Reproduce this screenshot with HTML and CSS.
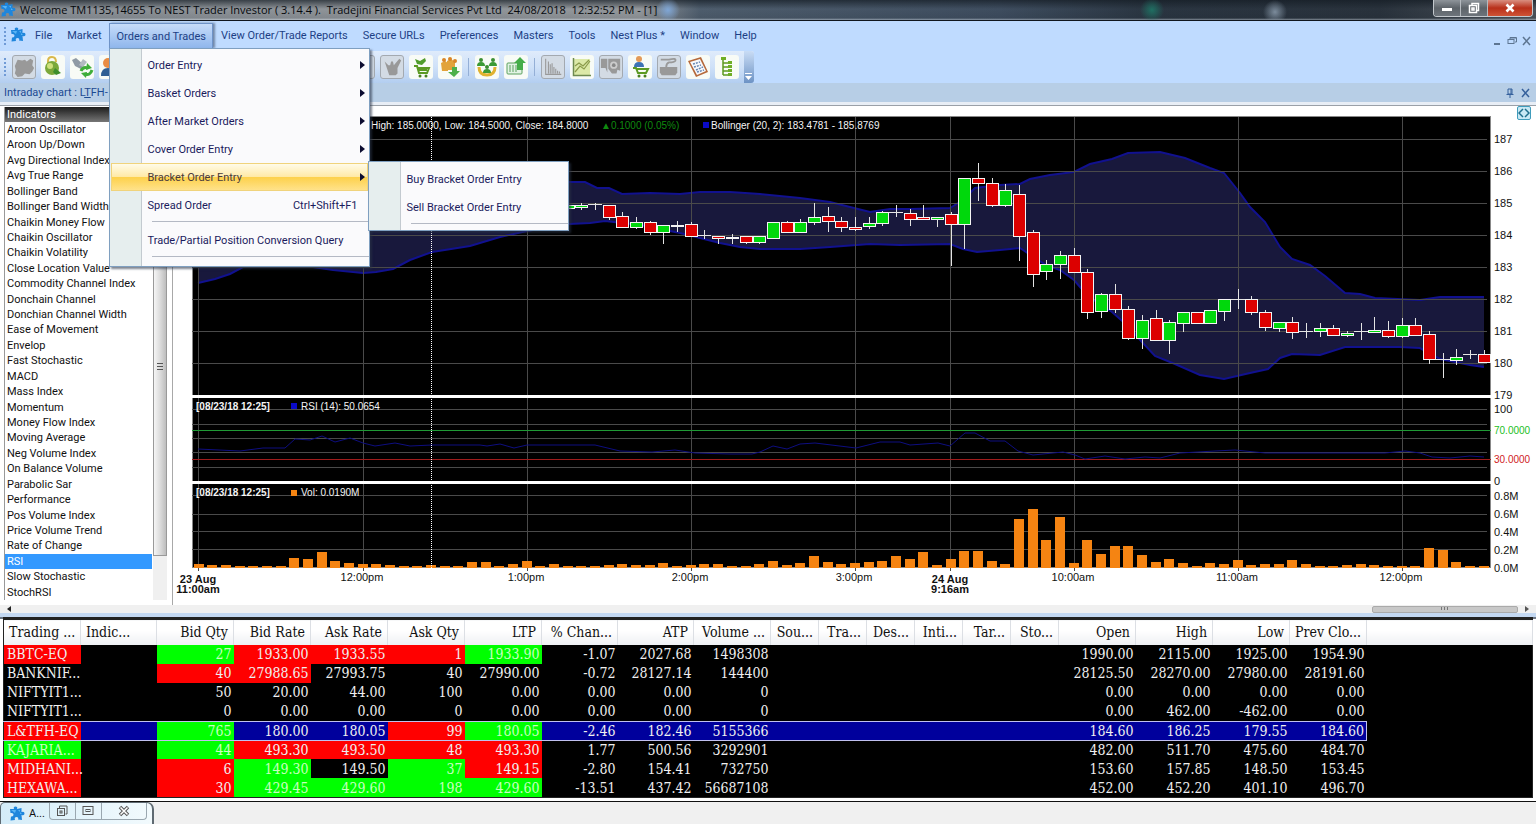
FILE: index.html
```
<!DOCTYPE html>
<html lang="en">
<head>
    <meta charset="UTF-8">
    <meta name="viewport" content="width=device-width, initial-scale=1.0">
    <title>NEST Trader Investor</title>
    <link rel="stylesheet" href="styles.css">
</head>
<body>

    <!-- shared puzzle logo -->
    <svg class="defs" width="0" height="0">
        <symbol id="puzzle" viewBox="0 0 16 16">
            <path d="M1 3 L5 3 Q4 0.5 6.5 0.5 Q9 0.5 8 3 L12.5 2 L12.5 6 Q15.5 5 15.5 7.5 Q15.5 10 12.5 9 L13 14 L9 13.5 Q10 11 7.5 11 Q5 11 6 14 L1.5 14.5 L2 10.5 Q4.5 11 4.5 8.5 Q4.5 6.5 1.5 7 Z" fill="#1f86dc"/>
            <path d="M2 4 L7 4 L6 7 Z M9 4 L11 4 L11 8 L13 8" fill="#58b4f5"/>
        </symbol>
    </svg>

    <header class="titlebar">
        <svg class="logo" width="16" height="16"><use href="#puzzle"/></svg>
        <h1>Welcome TM1135,14655 To NEST Trader Investor ( 3.14.4 ).&nbsp; Tradejini Financial Services Pvt Ltd&nbsp; 24/08/2018&nbsp; 12:32:52 PM - [1]</h1>
        <div class="win-buttons">
            <button aria-label="Minimize"><svg width="12" height="12"><rect x="1" y="6" width="10" height="3" fill="#fff"/></svg></button>
            <button aria-label="Restore"><svg width="12" height="12" fill="none" stroke="#fff" stroke-width="1.5"><path d="M4 3V1.500h6.500v7H9"/><rect x="1.500" y="3.500" width="7" height="7"/><rect x="4" y="6" width="2" height="2"/></svg></button>
            <button class="close" aria-label="Close"><svg width="12" height="12"><path d="M2.500 2.500l7 7M9.500 2.500l-7 7" stroke="#fff" stroke-width="2.600"/></svg></button>
        </div>
    </header>

    <nav class="menubar">
        <span class="grip"></span>
        <svg class="logo" width="16" height="16"><use href="#puzzle"/></svg>
        <button>File</button>
        <button>Market</button>
        <div class="menu-open">
            <button class="active">Orders and Trades</button>
            <ul class="menu">
                <li><button>Order Entry</button><i class="arrow"></i></li>
                <li><button>Basket Orders</button><i class="arrow"></i></li>
                <li><button>After Market Orders</button><i class="arrow"></i></li>
                <li><button>Cover Order Entry</button><i class="arrow"></i></li>
                <li class="selected"><button>Bracket Order Entry</button><i class="arrow"></i>
                    <ul class="menu submenu">
                        <li><button>Buy Bracket Order Entry</button></li>
                        <li><button>Sell Bracket Order Entry</button></li>
                        <li class="sep"></li>
                    </ul>
                </li>
                <li><button>Spread Order</button><kbd>Ctrl+Shift+F1</kbd></li>
                <li class="sep"></li>
                <li><button>Trade/Partial Position Conversion Query</button></li>
                <li class="sep"></li>
            </ul>
        </div>
        <button>View Order/Trade Reports</button>
        <button>Secure URLs</button>
        <button>Preferences</button>
        <button>Masters</button>
        <button>Tools</button>
        <button>Nest Plus *</button>
        <button>Window</button>
        <button>Help</button>
        <div class="mdi-buttons">
            <button aria-label="Minimize chart"><svg width="10" height="10"><rect x="2" y="7" width="6" height="2" fill="#5d7591"/></svg></button>
            <button aria-label="Restore chart"><svg width="10" height="10" fill="none" stroke="#5d7591"><path d="M3 3V1.500h6.500V6H8M3 2h6"/><rect x="1" y="3.500" width="6" height="4"/></svg></button>
            <button aria-label="Close chart"><svg width="10" height="10"><path d="M1 1l7 8M8 1l-7 8" stroke="#5d7591" stroke-width="1.500"/></svg></button>
        </div>
    </nav>

    <div class="toolbar-row">
        <div class="toolbar">
            <span class="grip"></span>
            <button class="off" aria-label="Connect"><svg viewBox="0 0 24 24"><path d="M5 4l5 1 3-1 2 2 4-3 3 2-1 5 2 3-2 4-3 3-5-1-3 3-5 1-3-4 1-4-1-4z" fill="#999"/></svg></button>
            <button aria-label="Lock"><svg viewBox="0 0 24 24"><path d="M7 10V6q0-4 4-4t4 5" fill="none" stroke="#d9b84a" stroke-width="2"/><circle cx="11" cy="13" r="7" fill="#7ba83a"/><circle cx="9" cy="11" r="3" fill="#cfe07a"/><path d="M14 13l6 5-5 2-3-3z" fill="#3e8e2c"/></svg></button>
            <button aria-label="Reconnect"><svg viewBox="0 0 24 24"><path d="M2 5l4-2 8 7-3 4-6-3z" fill="#8f9aa5"/><path d="M13 4l4 3-4 5-4-2z" fill="#b2bac2"/><path d="M11 16q2-5 7-3M22 15q-2 6-7 4" fill="none" stroke="#3fae3a" stroke-width="3"/><path d="M17 8l5 5-6 2zM16 23l-5-5 6-1z" fill="#3fae3a"/></svg></button>
            <button aria-label="User"><svg viewBox="0 0 24 24"><circle cx="9" cy="8" r="5" fill="#e98c43"/><path d="M2 21q0-8 7-8t7 8z" fill="#2f5f94"/></svg></button>
            <span class="toolbar-rest"></span>
            <button class="off" aria-label="Orders"><svg viewBox="0 0 24 24"><rect x="5" y="5" width="14" height="14" fill="#999"/></svg></button>
            <button class="off" aria-label="Basket"><svg viewBox="0 0 24 24"><path d="M4 6l4 4h2l1-4h2l1 4 6-7 2 2-4 8v6l-2 2H9l-2-6z" fill="#999"/></svg></button>
            <button aria-label="Buy cart"><svg viewBox="0 0 24 24"><path d="M5 11h3l2 7h8l2-5H9" fill="none" stroke="#5b9a22" stroke-width="2"/><path d="M6 4l5 2 5-3 1 3-4 4-5-1z" fill="#4f9c2b"/><path d="M10 15h8" stroke="#5b9a22" stroke-width="2"/><circle cx="11" cy="21" r="1.500" fill="#47811c"/><circle cx="17" cy="21" r="1.500" fill="#47811c"/></svg></button>
            <button aria-label="Group orders"><svg viewBox="0 0 24 24"><path d="M3 8l4-2 3 2v8H4zM9 6l4-2 4 3v8H9z" fill="#e2a33a"/><circle cx="6" cy="5" r="2" fill="#d98528"/><circle cx="12" cy="4" r="2" fill="#d98528"/><circle cx="17" cy="6" r="2" fill="#d98528"/><path d="M14 12h5v4h3l-6 6-6-5h4z" fill="#4db04a"/></svg></button>
            <span class="sep"></span>
            <button aria-label="Members"><svg viewBox="0 0 24 24"><path d="M4 12q0 8 8 8t8-8" fill="none" stroke="#e0b22f" stroke-width="3"/><circle cx="6" cy="5" r="2" fill="#3b8f33"/><circle cx="18" cy="5" r="2" fill="#3b8f33"/><circle cx="12" cy="12" r="2" fill="#3b8f33"/><path d="M2 11q0-4 4-4t4 4zM14 11q0-4 4-4t4 4zM8 18q0-4 4-4t4 4z" fill="#3b9a35"/></svg></button>
            <button aria-label="Upload"><svg viewBox="0 0 24 24"><rect x="3" y="8" width="15" height="11" rx="1" fill="#e2f3e4" stroke="#5aa05e"/><path d="M6 10v7M9 10v7M12 10v7" stroke="#5aa05e"/><path d="M16 2l6 6h-3v7h-6V8h-3z" fill="#45ad49"/></svg></button>
            <span class="sep"></span>
            <button class="off" aria-label="Histogram"><svg viewBox="0 0 24 24"><path d="M4 3v17h17M7 6v13M9 9v10M11 8v11M13 12v7M15 14v5M17 16v3M19 17v2" fill="none" stroke="#999" stroke-width="1.200"/></svg></button>
            <button aria-label="Line chart"><svg viewBox="0 0 24 24"><rect x="4" y="4" width="16" height="16" fill="#dce9a8"/><path d="M3.500 3v17.500H21" fill="none" stroke="#6e8a50" stroke-width="1.500"/><path d="M5 17l5-6 4 3 6-8M5 11l4-3 4 3 6-6" fill="none" stroke="#8a9a4a" stroke-width="1.200"/></svg></button>
            <button class="off" aria-label="Snapshot"><svg viewBox="0 0 24 24"><path d="M1 3h7v15l-2-5H1z" fill="#999"/><path d="M9 3h13v13l-3-1-1 4h-5l-4-5z" fill="#999"/><circle cx="15" cy="10" r="4" fill="#ccc"/><circle cx="15" cy="10" r="2" fill="#888"/></svg></button>
            <button aria-label="Client cart"><svg viewBox="0 0 24 24"><circle cx="11" cy="4" r="3" fill="#e39a58"/><path d="M6 12q0-5 5-5t5 5z" fill="#3c72b4"/><path d="M5 13h3l2 5h8l2-4H9" fill="none" stroke="#5b9a22" stroke-width="2"/><circle cx="11" cy="21" r="1.500" fill="#47811c"/><circle cx="17" cy="21" r="1.500" fill="#47811c"/></svg></button>
            <button class="off" aria-label="Scanner"><svg viewBox="0 0 24 24"><path d="M2 12h19v6l-2 3H4l-2-3z" fill="#999"/><path d="M3 4h9q8-2 7 1-1 2-7 2-3 1-3 5" fill="none" stroke="#999" stroke-width="2"/></svg></button>
            <button aria-label="Calculator"><svg viewBox="0 0 24 24"><path d="M2 6l13-4 7 15-12 5z" fill="#b5683a"/><path d="M4 7l10-3 6 12-9 4z" fill="#f7f9fc"/><path d="M7 9l7-2M8 12l7-2M10 15l7-3M11 17l7-2" stroke="#6887b3" stroke-width="1.500" stroke-dasharray="2 1"/></svg></button>
            <button aria-label="Tree"><svg viewBox="0 0 24 24"><path d="M8 4v16M8 8h6M8 12h8M8 16h8M8 20h8" fill="none" stroke="#5c9a1e" stroke-width="1.500"/><path d="M6 2h5v3H6zM13 6h4v3h-4zM13 10h4v3h-4zM13 14h4v3h-4zM13 18h4v3h-4z" fill="#6fae25"/></svg></button>
            <button class="overflow" aria-label="More tools"><svg width="9" height="9"><path d="M1 1.500h7" stroke="#fff"/><path d="M1 4h7l-3.500 4z" fill="#fff"/></svg></button>
        </div>
    </div>

    <div class="caption">
        <span>Intraday chart : L<u>T</u>FH-</span>
        <button class="pin" aria-label="Pin"><svg width="10" height="10" fill="none" stroke="#35609c"><path d="M3 1h4v5H3zM1.500 6.500h7M5 6v4M6 1v5"/></svg></button>
        <button aria-label="Close panel"><svg width="10" height="10"><path d="M1 1l7 8M8 1l-7 8" stroke="#35609c" stroke-width="1.500"/></svg></button>
    </div>

    <main class="workspace">
        <div class="panes">
            <aside class="indicators">
                <div class="list">
                    <h2>Indicators</h2>
                    <ul>
                        <li>Aroon Oscillator</li>
                        <li>Aroon Up/Down</li>
                        <li>Avg Directional Index</li>
                        <li>Avg True Range</li>
                        <li>Bollinger Band</li>
                        <li>Bollinger Band Width</li>
                        <li>Chaikin Money Flow</li>
                        <li>Chaikin Oscillator</li>
                        <li>Chaikin Volatility</li>
                        <li>Close Location Value</li>
                        <li>Commodity Channel Index</li>
                        <li>Donchain Channel</li>
                        <li>Donchian Channel Width</li>
                        <li>Ease of Movement</li>
                        <li>Envelop</li>
                        <li>Fast Stochastic</li>
                        <li>MACD</li>
                        <li>Mass Index</li>
                        <li>Momentum</li>
                        <li>Money Flow Index</li>
                        <li>Moving Average</li>
                        <li>Neg Volume Index</li>
                        <li>On Balance Volume</li>
                        <li>Parabolic Sar</li>
                        <li>Performance</li>
                        <li>Pos Volume Index</li>
                        <li>Price Volume Trend</li>
                        <li>Rate of Change</li>
                        <li class="current">RSI</li>
                        <li>Slow Stochastic</li>
                        <li>StochRSI</li>
                    </ul>
                </div>
                <div class="vscroll"><div class="thumb"></div></div>
            </aside>
            <section class="chart">
                <svg id="chart" viewBox="173 106 1358 499"></svg>
                <button class="expand" aria-label="Toggle panel"><svg width="12" height="10"><path d="M5 1L1 5l4 4M7 1l4 4-4 4" fill="none" stroke="#1f6f8c" stroke-width="1.500"/></svg></button>
            </section>
        </div>
        <div class="hscroll">
            <svg width="6" height="8"><path d="M5 1v6L1 4z" fill="#222"/></svg>
            <div class="thumb"></div>
            <svg width="6" height="8"><path d="M1 1v6l4-3z" fill="#555"/></svg>
        </div>
    </main>

    <section class="watch">
        <table>
            <colgroup>
                <col class="w77"><col class="w76"><col class="w77"><col class="w77"><col class="w77"><col class="w77"><col class="w77"><col class="w76"><col class="w76"><col class="w77">
                <col class="w48"><col class="w48"><col class="w48"><col class="w48"><col class="w48"><col class="w48">
                <col class="w77"><col class="w77"><col class="w77"><col class="w77"><col>
            </colgroup>
            <thead>
                <tr><th class="l">Trading ...</th><th class="l">Indic...</th><th>Bid Qty</th><th>Bid Rate</th><th>Ask Rate</th><th>Ask Qty</th><th>LTP</th><th>% Chan...</th><th>ATP</th><th>Volume ...</th><th>Sou...</th><th>Tra...</th><th>Des...</th><th>Inti...</th><th>Tar...</th><th>Sto...</th><th>Open</th><th>High</th><th>Low</th><th>Prev Clo...</th><th></th></tr>
            </thead>
            <tbody>
                <tr><td class="l red">BBTC-EQ</td><td></td><td class="green">27</td><td class="red">1933.00</td><td class="red">1933.55</td><td class="red">1</td><td class="green">1933.90</td><td>-1.07</td><td>2027.68</td><td>1498308</td><td></td><td></td><td></td><td></td><td></td><td></td><td>1990.00</td><td>2115.00</td><td>1925.00</td><td>1954.90</td><td></td></tr>
                <tr><td class="l">BANKNIF...</td><td></td><td class="red">40</td><td class="red">27988.65</td><td>27993.75</td><td>40</td><td>27990.00</td><td>-0.72</td><td>28127.14</td><td>144400</td><td></td><td></td><td></td><td></td><td></td><td></td><td>28125.50</td><td>28270.00</td><td>27980.00</td><td>28191.60</td><td></td></tr>
                <tr><td class="l">NIFTYIT1...</td><td></td><td>50</td><td>20.00</td><td>44.00</td><td>100</td><td>0.00</td><td>0.00</td><td>0.00</td><td>0</td><td></td><td></td><td></td><td></td><td></td><td></td><td>0.00</td><td>0.00</td><td>0.00</td><td>0.00</td><td></td></tr>
                <tr><td class="l">NIFTYIT1...</td><td></td><td>0</td><td>0.00</td><td>0.00</td><td>0</td><td>0.00</td><td>0.00</td><td>0.00</td><td>0</td><td></td><td></td><td></td><td></td><td></td><td></td><td>0.00</td><td>462.00</td><td>-462.00</td><td>0.00</td><td></td></tr>
                <tr class="current"><td class="l red">L&amp;TFH-EQ</td><td></td><td class="green">765</td><td>180.00</td><td>180.05</td><td class="red">99</td><td class="green">180.05</td><td>-2.46</td><td>182.46</td><td>5155366</td><td></td><td></td><td></td><td></td><td></td><td></td><td>184.60</td><td>186.25</td><td>179.55</td><td>184.60</td><td></td></tr>
                <tr><td class="l green">KAJARIA...</td><td></td><td class="green">44</td><td class="red">493.30</td><td class="red">493.50</td><td class="red">48</td><td class="red">493.30</td><td>1.77</td><td>500.56</td><td>3292901</td><td></td><td></td><td></td><td></td><td></td><td></td><td>482.00</td><td>511.70</td><td>475.60</td><td>484.70</td><td></td></tr>
                <tr><td class="l red">MIDHANI...</td><td></td><td class="red">6</td><td class="green">149.30</td><td>149.50</td><td class="green">37</td><td class="red">149.15</td><td>-2.80</td><td>154.41</td><td>732750</td><td></td><td></td><td></td><td></td><td></td><td></td><td>153.60</td><td>157.85</td><td>148.50</td><td>153.45</td><td></td></tr>
                <tr><td class="l red">HEXAWA...</td><td></td><td class="red">30</td><td class="green">429.45</td><td class="green">429.60</td><td class="green">198</td><td class="green">429.60</td><td>-13.51</td><td>437.42</td><td>56687108</td><td></td><td></td><td></td><td></td><td></td><td></td><td>452.00</td><td>452.20</td><td>401.10</td><td>496.70</td><td></td></tr>
            </tbody>
        </table>
    </section>

    <footer class="tray">
        <div class="mini">
            <svg class="logo" width="16" height="16"><use href="#puzzle"/></svg>
            <span>A...</span>
            <div class="mini-buttons">
                <button aria-label="Restore window"><svg width="12" height="12" fill="none" stroke="#555"><path d="M3.500 3V1h7.500v8H9.500"/><rect x="1.500" y="3.500" width="7" height="7"/><rect x="4" y="6" width="2" height="2"/></svg></button>
                <button aria-label="Maximize window"><svg width="12" height="12" fill="none" stroke="#555"><rect x="1" y="1.500" width="10" height="8"/><rect x="4" y="4.500" width="4" height="2"/></svg></button>
                <button class="wide" aria-label="Close window"><svg width="12" height="12"><path d="M2 2l8 8M10 2l-8 8" stroke="#555" stroke-width="3.500"/><path d="M2.500 2.500l7 7M9.500 2.500l-7 7" stroke="#fff" stroke-width="1.500"/></svg></button>
            </div>
        </div>
    </footer>

    <script src="chart.js"></script>
</body>
</html>
```

FILE: styles.css
```
* {
    box-sizing: border-box;
}
body {
    margin: 0;
    height: 100vh;
    display: flex;
    flex-direction: column;
    overflow: hidden;
    font-family: Roboto, "Open Sans", sans-serif;
    font-size: 11px;
    background-color: #f0f0f0;
}
button {
    font: inherit;
    color: inherit;
    background: none;
    border: none;
    padding: 0;
    margin: 0;
    white-space: nowrap;
}
button svg {
    display: block;
}
ul {
    list-style: none;
    margin: 0;
    padding: 0;
}
.defs {
    position: absolute;
}
.logo {
    flex: none;
}

/* title bar */
.titlebar {
    flex: none;
    height: 21px;
    display: flex;
    align-items: center;
    border-bottom: 1px solid #10161e;
    background:
        radial-gradient(circle at 668px 10px, #7fa6d6 0, rgba(127, 166, 214, 0) 12px),
        radial-gradient(circle at 1152px 10px, #1f6f62 0, rgba(31, 111, 98, 0) 12px),
        radial-gradient(circle at 1275px 12px, #7c8c9c 0, rgba(124, 140, 156, 0) 12px),
        linear-gradient(to bottom, rgba(20, 28, 36, 0.7), rgba(20, 28, 36, 0) 45%, rgba(20, 28, 36, 0.1) 90%, rgba(220, 230, 240, 0.5)),
        linear-gradient(to right, #8a9096 0, #94989c 640px, #4e5d6d 700px, #3e4d5f 1000px, #2a3541 1150px, #29323c 1380px, #4c535b 100%);
}
.titlebar h1 {
    margin: 0 0 0 4px;
    flex: 1;
    font-family: "Open Sans", sans-serif;
    font-size: 11px;
    font-weight: normal;
    line-height: 16px;
    color: #05080c;
    white-space: nowrap;
}
.win-buttons {
    align-self: flex-start;
    display: flex;
    margin-right: 3px;
    border: 1px solid #c3c8cd;
    border-top: none;
    border-radius: 0 0 4px 4px;
    overflow: hidden;
}
.win-buttons button {
    width: 27px;
    height: 16px;
    display: flex;
    align-items: center;
    justify-content: center;
    border-right: 1px solid #b5babf;
    background: linear-gradient(#8e949a, #5d6369 50%, #6d747b);
}
.win-buttons .close {
    width: 44px;
    border-right: none;
    background: linear-gradient(#d98f80, #b8301a 50%, #cf5336);
}

/* menu bar */
.menubar {
    flex: none;
    height: 30px;
    display: flex;
    align-items: flex-start;
    gap: 1px;
    padding-top: 2px;
    color: #1d3f85;
    background-color: #bfdbff;
}
.grip {
    flex: none;
    width: 2px;
    height: 18px;
    margin: 0 3px 0 4px;
    background: repeating-linear-gradient(#6f9ad6 0 2px, transparent 2px 4px);
}
.menubar > .grip,
.menubar > .logo {
    margin-top: 4px;
}
.menubar > button,
.menu-open > button {
    height: 25px;
    padding: 0 7px;
}
.menubar > .logo + button {
    margin-left: 1px;
}
.menu-open {
    position: relative;
}
.menu-open > .active {
    padding: 0 6px;
    border: 1px solid #6e93c8;
    border-bottom: none;
    background: linear-gradient(#c6dcfa, #8fb6ec);
    box-shadow: 2px 0 2px rgba(60, 80, 110, 0.6);
}
.mdi-buttons {
    margin-left: auto;
    padding: 13px 4px 0 0;
    display: flex;
    gap: 5px;
}

.menu {
    position: absolute;
    z-index: 10;
    top: 100%;
    left: 0;
    width: 261px;
    padding: 2px 0 5px;
    border: 1px solid #7f9fc0;
    color: #1b1b5c;
    background: linear-gradient(to right, #e6eeee 31px, #c3cad0 31px, #c3cad0 32px, #fafafc 32px);
    box-shadow: 2px 2px 2px rgba(40, 50, 70, 0.6);
}
.menu li {
    position: relative;
    height: 28px;
    display: flex;
    align-items: center;
    justify-content: space-between;
    padding: 0 4px 0 37px;
}
.menu .sep {
    height: 7px;
    margin-left: 42px;
    padding: 0;
    background: linear-gradient(#b4b9c4, #b4b9c4) 0 2px / 100% 1px no-repeat;
}
.menu kbd {
    font: inherit;
    margin-right: 8px;
}
.arrow {
    border-left: 5px solid #0c0c30;
    border-top: 4px solid transparent;
    border-bottom: 4px solid transparent;
}
.menu .selected {
    color: #4a3a3a;
}
.menu .selected::before {
    content: "";
    position: absolute;
    z-index: -1;
    inset: 0 1px;
    border: 1px solid #f0d37c;
    background: linear-gradient(#fffbe8, #ffeaa8 48%, #fdd14c 52%, #ffe28a);
}
.submenu {
    top: -2px;
    left: 258px;
    width: 201px;
    padding: 3px 0 2px;
    color: #1b1b5c;
}

/* toolbar */
.toolbar-row {
    flex: none;
    height: 32px;
    display: flex;
    background-color: #bfdbff;
}
.toolbar {
    display: flex;
    align-items: center;
    gap: 5px;
    border-radius: 0 3px 3px 0;
    background: linear-gradient(#dfebfb, #cfe1f8 50%, #b3cef0);
}
.toolbar .grip {
    margin-right: 1px;
}
.toolbar button {
    width: 24px;
    height: 24px;
    border-radius: 3px;
    background-color: #f8fbf6;
}
.toolbar .off {
    border: 1px solid #a3a9b0;
    background-color: #d3dbe4;
}
.toolbar .sep {
    width: 1px;
    height: 18px;
    margin: 0 1px;
    background-color: #94afd6;
}
.toolbar-rest {
    width: 218px;
}
.toolbar .overflow {
    align-self: stretch;
    width: 10px;
    height: auto;
    display: flex;
    align-items: flex-end;
    padding-bottom: 2px;
    border-radius: 0 3px 3px 0;
    background: linear-gradient(#c9dcf5, #6d93c5);
}

/* docked panel caption */
.caption {
    flex: none;
    height: 19px;
    display: flex;
    align-items: center;
    gap: 6px;
    padding: 0 5px 0 4px;
    color: #1d4a92;
    background-color: #b7cee6;
}
.caption .pin {
    margin-left: auto;
}

/* indicator list + chart */
.workspace {
    flex: 1;
    min-height: 0;
    display: flex;
    flex-direction: column;
    padding-top: 3px;
    background-color: #e8eef6;
}
.panes {
    flex: 1;
    min-height: 0;
    display: flex;
    border-top: 1px solid #9aa0a8;
    background-color: #fff;
}
.indicators {
    flex: none;
    width: 173px;
    display: flex;
    padding: 1px 5px 5px 4px;
    border-right: 1px solid #a8a8a8;
}
.list {
    flex: 1;
    display: flex;
    flex-direction: column;
    border-left: 1px solid #999;
}
.list h2 {
    margin: 0;
    font-size: 11px;
    font-weight: normal;
    line-height: 15px;
    padding-left: 2px;
    color: #fff;
    background: linear-gradient(#1c1c1c, #777);
}
.list ul {
    flex: 1;
    display: flex;
    flex-direction: column;
    margin-right: 1px;
}
.list li {
    flex: 1;
    line-height: 15px;
    padding-left: 2px;
    color: #111;
    white-space: nowrap;
}
.list .current {
    color: #fff;
    background-color: #3399ff;
}
.vscroll {
    width: 14px;
    padding-bottom: 44px;
    background-color: #f0f0f0;
}
.vscroll .thumb {
    height: 100%;
    border: 1px solid #999;
    background:
        repeating-linear-gradient(#555 0 1px, transparent 1px 3px) 50% 255px / 6px 8px no-repeat,
        linear-gradient(to right, #f5f5f5, #dcdcdc 50%, #bdbdbd);
}
.chart {
    position: relative;
    flex: 1;
    min-width: 0;
    margin-right: 5px;
    overflow: hidden;
}
.chart > svg {
    display: block;
    width: 100%;
    height: 100%;
    font-family: "Liberation Sans", Arial, sans-serif;
    font-size: 10px;
}
.expand {
    position: absolute;
    top: 0;
    right: 0;
    width: 14px;
    height: 14px;
    border: 1px solid #3f9cbc;
    border-radius: 2px;
    background-color: #c8e8f4;
}
.hscroll {
    flex: none;
    height: 8px;
    display: flex;
    align-items: center;
    padding: 0 6px;
    background-color: #f0f0f0;
}
.hscroll .thumb {
    width: 146px;
    height: 7px;
    margin: 0 6px 0 auto;
    border: 1px solid #aaa;
    border-radius: 2px;
    background: repeating-linear-gradient(to right, #777 0 1px, transparent 1px 3px) 50% 0 / 8px 3px no-repeat, #c8c8c8;
}

/* chart parts */
.pane { fill: #000; stroke: #888; }
.divider { fill: #fff; }
.grid { stroke: #4a4a4a; fill: none; }
.cursor { stroke: #fff; stroke-dasharray: 1 1; }
.band { fill: #18183c; }
.band-line { fill: none; stroke: #11118f; stroke-width: 2; }
.rsi-line { fill: none; stroke: #0e0e80; }
.high-line { stroke: #1f9a35; }
.low-line { stroke: #a01c1c; }
.wick { stroke: #e4e4e4; }
.up { fill: #00d80c; stroke: #f4f4f4; }
.down { fill: #dc0000; stroke: #f4f4f4; }
.bar { fill: #f58412; }
.legend { fill: #f4f4f4; }
.legend-up { fill: #0f8a0f; }
.axis { font-size: 11px; fill: #111; }
.axis-high { fill: #1cc024; }
.axis-low { fill: #d01c24; }
.bold { font-weight: bold; }

/* market watch */
.watch {
    flex: none;
    padding: 0 3px 3px;
    border-top: 4px solid #c3d8f2;
    border-bottom: 1px solid #111;
    background: linear-gradient(#6c7684 2px, #fff 2px);
}
.watch table {
    width: 100%;
    height: 181px;
    table-layout: fixed;
    border-collapse: collapse;
    border: 1px solid #222;
    border-width: 3px 1px 1px;
    font-family: "DejaVu Serif Condensed", "DejaVu Serif", serif;
    font-size: 14px;
    line-height: 18px;
    color: #f0f0f0;
    background-color: #000;
}
.w77 { width: 77px; }
.w76 { width: 76px; }
.w48 { width: 48px; }
.watch th {
    height: 26px;
    padding: 0 5px;
    font-weight: normal;
    text-align: right;
    white-space: nowrap;
    color: #111;
    border-right: 1px solid #dcdfe4;
    background: linear-gradient(#fff 40%, #eef0f3);
}
.watch td {
    height: 19px;
    padding: 0 2px;
    text-align: right;
    white-space: nowrap;
}
.watch .l {
    text-align: left;
}
.watch td.l {
    padding: 0 3px;
}
.red { background-color: #ff0000; }
.green { background-color: #00ff00; color: #c8ffc0; }
.current td {
    border-top: 1px solid #c0c0f0;
    border-bottom: 1px solid #c0c0f0;
}
.current td:not(.red):not(.green) { background-color: #00009c; }
.current td:nth-child(20) { border-right: 1px solid #c0c0f0; }
.watch .current td:last-child {
    border: none;
    background-color: #000;
}

/* minimised child windows */
.tray {
    flex: none;
    height: 22px;
    display: flex;
    background-color: #f0f0f0;
}
.mini {
    width: 154px;
    display: flex;
    gap: 4px;
    padding: 0 8px;
    border: 1px solid #5f6a72;
    border-width: 1px 2px 0 1px;
    border-radius: 5px 7px 0 0;
    background: linear-gradient(to right, #d4ecf8, #f2fafd);
}
.mini .logo {
    margin-top: 3px;
}
.mini span {
    line-height: 22px;
    color: #111;
}
.mini-buttons {
    flex: none;
    height: 17px;
    display: flex;
    border: 1px solid #9aa7b0;
    border-top: none;
    border-radius: 0 0 4px 4px;
}
.mini-buttons button {
    width: 26px;
    display: flex;
    align-items: center;
    justify-content: center;
    border-right: 1px solid #9aa7b0;
}
.mini-buttons .wide {
    width: 44px;
    border-right: none;
}
```

FILE: chart.js
```
const NS = "http://www.w3.org/2000/svg";
const chart = document.getElementById("chart");

const LEFT = 192, RIGHT = 1491, STEP = 13.67, BASE = 568;
const xAt = i => 198.7 + STEP * i;

function add(tag, cls, attrs, text) {
    const el = document.createElementNS(NS, tag);
    el.setAttribute("class", cls);
    for (const key in attrs) el.setAttribute(key, attrs[key]);
    if (text) el.textContent = text;
    chart.appendChild(el);
}
function line(cls, x1, y1, x2, y2) {
    add("line", cls, { x1, y1, x2, y2 });
}
function label(cls, x, y, text, anchor) {
    add("text", cls, { x, y, "text-anchor": anchor || "start" }, text);
}

const upper = "198,190 300,180 430,178 569,182 585,182 597,188 609,188 622,194 650,193 680,194 700,192 730,192 760,194 800,198 830,202 850,207 870,212 890,209 910,209 950,208 963,200 975,188 1000,185 1020,184 1030,179 1050,175 1074,172 1090,164 1112,159 1128,153 1160,152 1185,158 1210,168 1224,173 1240,193 1250,207 1265,222 1280,247 1292,259 1310,265 1325,276 1345,293 1360,294 1375,298 1420,300 1440,297 1484,297";
const lower = "198,283 215,279 230,274 243,267 280,262 313,267 333,270 363,273 376,272 393,269 410,260 432,252 470,246 500,237 527,231 569,224 590,223 605,221 640,225 680,233 720,243 740,247 760,249 800,249 830,247 870,244 900,245 950,244 963,249 977,252 1000,250 1020,248 1032,256 1046,265 1060,270 1074,280 1087,295 1101,305 1112,312 1128,326 1142,342 1155,356 1175,364 1200,375 1224,379 1250,373 1268,369 1280,358 1292,354 1320,355 1345,347 1400,347 1420,348 1440,359 1470,365 1484,367";
const rsi = "198,449 240,451 263,448 285,448 295,439 310,440 322,436 335,442 350,438 363,443 375,446 395,443 410,446 432,445 480,445 487,446 500,444 514,448 527,445 595,445 620,451 652,452 675,450 695,453 730,454 752,454 760,452 773,446 787,449 800,444 815,443 856,448 880,442 900,442 910,445 938,443 950,446 965,433 975,433 990,441 1005,441 1018,451 1033,455 1063,452 1075,455 1085,459 1105,456 1125,459 1145,457 1160,458 1180,453 1215,451 1235,450 1265,453 1385,453 1405,451 1420,453 1432,457 1450,458 1470,456 1484,457";

// body top, body bottom, high, low, direction; first candle is index 27
const candles = [
    [205, 208, 205, 208, "up"], [205, 207, 203, 210, "up"], [204, 204, 203, 210, "flat"], [205, 217, 205, 220, "down"],
    [216, 227, 212, 227, "down"], [222, 227, 217, 229, "up"], [222, 232, 221, 235, "down"], [225, 232, 225, 244, "up"],
    [225, 226, 221, 232, "up"], [224, 236, 222, 236, "down"], [235, 235, 230, 239, "flat"], [236, 238, 236, 244, "down"],
    [237, 238, 234, 244, "up"], [236, 242, 236, 244, "down"], [236, 242, 236, 244, "up"], [222, 238, 222, 238, "up"],
    [222, 232, 221, 232, "down"], [222, 232, 219, 232, "up"], [217, 222, 203, 225, "up"], [216, 221, 207, 232, "down"],
    [221, 227, 217, 232, "down"], [227, 229, 217, 231, "down"], [223, 226, 217, 229, "up"], [212, 223, 211, 226, "up"],
    [212, 212, 205, 217, "flat"], [213, 219, 209, 226, "down"], [217, 219, 205, 219, "down"], [217, 219, 217, 227, "up"],
    [214, 224, 212, 266, "down"], [178, 224, 178, 249, "up"], [178, 183, 163, 201, "down"], [183, 205, 178, 207, "down"],
    [190, 205, 184, 207, "up"], [194, 236, 185, 261, "down"], [232, 274, 230, 287, "down"], [264, 271, 260, 280, "up"],
    [255, 264, 251, 279, "up"], [255, 272, 248, 272, "down"], [272, 312, 269, 319, "down"], [294, 311, 293, 318, "up"],
    [294, 309, 284, 313, "down"], [309, 338, 306, 340, "down"], [320, 338, 315, 349, "up"], [318, 340, 310, 340, "down"],
    [322, 340, 320, 354, "up"], [312, 323, 312, 332, "up"], [312, 323, 312, 323, "down"], [310, 323, 310, 323, "up"],
    [299, 311, 299, 321, "up"], [299, 299, 289, 309, "flat"], [299, 312, 296, 315, "down"], [312, 327, 310, 331, "down"],
    [322, 328, 322, 332, "up"], [322, 332, 317, 339, "down"], [331, 331, 323, 338, "flat"], [328, 331, 323, 337, "up"],
    [328, 335, 325, 335, "down"], [333, 335, 331, 337, "up"], [331, 331, 323, 340, "flat"], [330, 332, 317, 332, "up"],
    [330, 336, 321, 338, "down"], [325, 336, 318, 338, "up"], [325, 335, 318, 335, "down"], [334, 359, 331, 364, "down"],
    [359, 359, 353, 378, "flat"], [357, 360, 349, 365, "up"], [354, 354, 350, 359, "flat"], [354, 362, 350, 363, "down"]
];

const volumes = [
    4, 3, 3, 2, 2, 2, 2, 10, 9, 16, 7, 5, 4, 4, 3, 2, 2, 3, 2, 2, 6, 6, 2, 4, 7, 2, 4, 2, 2, 2, 3, 4,
    3, 3, 5, 2, 3, 4, 4, 2, 2, 4, 7, 3, 5, 12, 6, 4, 5, 6, 7, 12, 9, 16, 3, 9, 17, 17, 7, 4, 49, 59,
    28, 51, 5, 28, 14, 22, 22, 13, 6, 9, 5, 2, 5, 4, 8, 3, 4, 4, 8, 4, 2, 2, 3, 4, 3, 2, 2, 2, 20, 18, 6, 2, 2
];

// panes
add("rect", "pane", { x: LEFT + 0.5, y: 116.5, width: RIGHT - LEFT - 1, height: 451 });

add("polygon", "band", { points: upper + " " + lower.split(" ").reverse().join(" ") });
add("polyline", "band-line", { points: upper });
add("polyline", "band-line", { points: lower });

// grid
[139, 171, 203, 235, 267, 299, 331, 363, 409, 424, 438, 452, 467, 495, 514, 531, 549]
    .forEach(y => line("grid", LEFT, y + 0.5, 1487, y + 0.5));
[198, 363, 527, 691, 855, 950, 1074, 1238, 1402]
    .forEach(x => line("grid", x + 0.5, 117, x + 0.5, 571));
line("high-line", LEFT, 430.5, RIGHT, 430.5);
line("low-line", LEFT, 459.5, RIGHT, 459.5);
add("polyline", "rsi-line", { points: rsi });

// volume
volumes.forEach((v, i) => add("rect", "bar", { x: Math.round(xAt(i)) - 5, y: BASE - v, width: 10, height: v }));

// candles
candles.forEach(([top, bottom, high, low, dir], n) => {
    const x = Math.round(xAt(n + 27));
    line("wick", x + 0.5, high, x + 0.5, low);
    if (dir === "flat") {
        line("wick", x - 7, top + 0.5, x + 7, top + 0.5);
    } else {
        add("rect", dir, { x: x - 5.5, y: top + 0.5, width: 12, height: bottom - top });
    }
});

line("cursor", 431.5, 117, 431.5, 568);
add("rect", "divider", { x: LEFT, y: 395, width: RIGHT - LEFT, height: 3 });
add("rect", "divider", { x: LEFT, y: 481, width: RIGHT - LEFT, height: 3 });

// legends
label("legend", 371, 129, "High: 185.0000, Low: 184.5000, Close: 184.8000");
label("legend-up", 601, 129, "▲0.1000 (0.05%)");
add("rect", "rsi", { x: 703, y: 122, width: 6, height: 6, fill: "#0a0ac8" });
label("legend", 711, 129, "Bollinger (20, 2): 183.4781 - 185.8769");
label("legend bold", 196, 410, "[08/23/18 12:25]");
add("rect", "rsi", { x: 291, y: 403, width: 6, height: 6, fill: "#0a0ac8" });
label("legend", 301, 410, "RSI (14): 50.0654");
label("legend bold", 196, 496, "[08/23/18 12:25]");
add("rect", "bar", { x: 291, y: 490, width: 6, height: 6 });
label("legend", 301, 496, "Vol: 0.0190M");

// price, RSI and volume axes
[187, 186, 185, 184, 183, 182, 181, 180, 179].forEach((p, i) => label("axis", 1494, 143 + i * 32, String(p)));
label("axis", 1494, 413, "100");
label("axis-high", 1494, 434, "70.0000");
label("axis-low", 1494, 463, "30.0000");
label("axis", 1494, 485, "0");
["0.8M", "0.6M", "0.4M", "0.2M", "0.0M"].forEach((v, i) => label("axis", 1494, 500 + i * 18, v));

// time axis
label("axis bold", 198, 583, "23 Aug", "middle");
label("axis bold", 198, 593, "11:00am", "middle");
label("axis bold", 950, 583, "24 Aug", "middle");
label("axis bold", 950, 593, "9:16am", "middle");
[[362, "12:00pm"], [526, "1:00pm"], [690, "2:00pm"], [854, "3:00pm"], [1073, "10:00am"], [1237, "11:00am"], [1401, "12:00pm"]]
    .forEach(([x, t]) => label("axis", x, 581, t, "middle"));
```
